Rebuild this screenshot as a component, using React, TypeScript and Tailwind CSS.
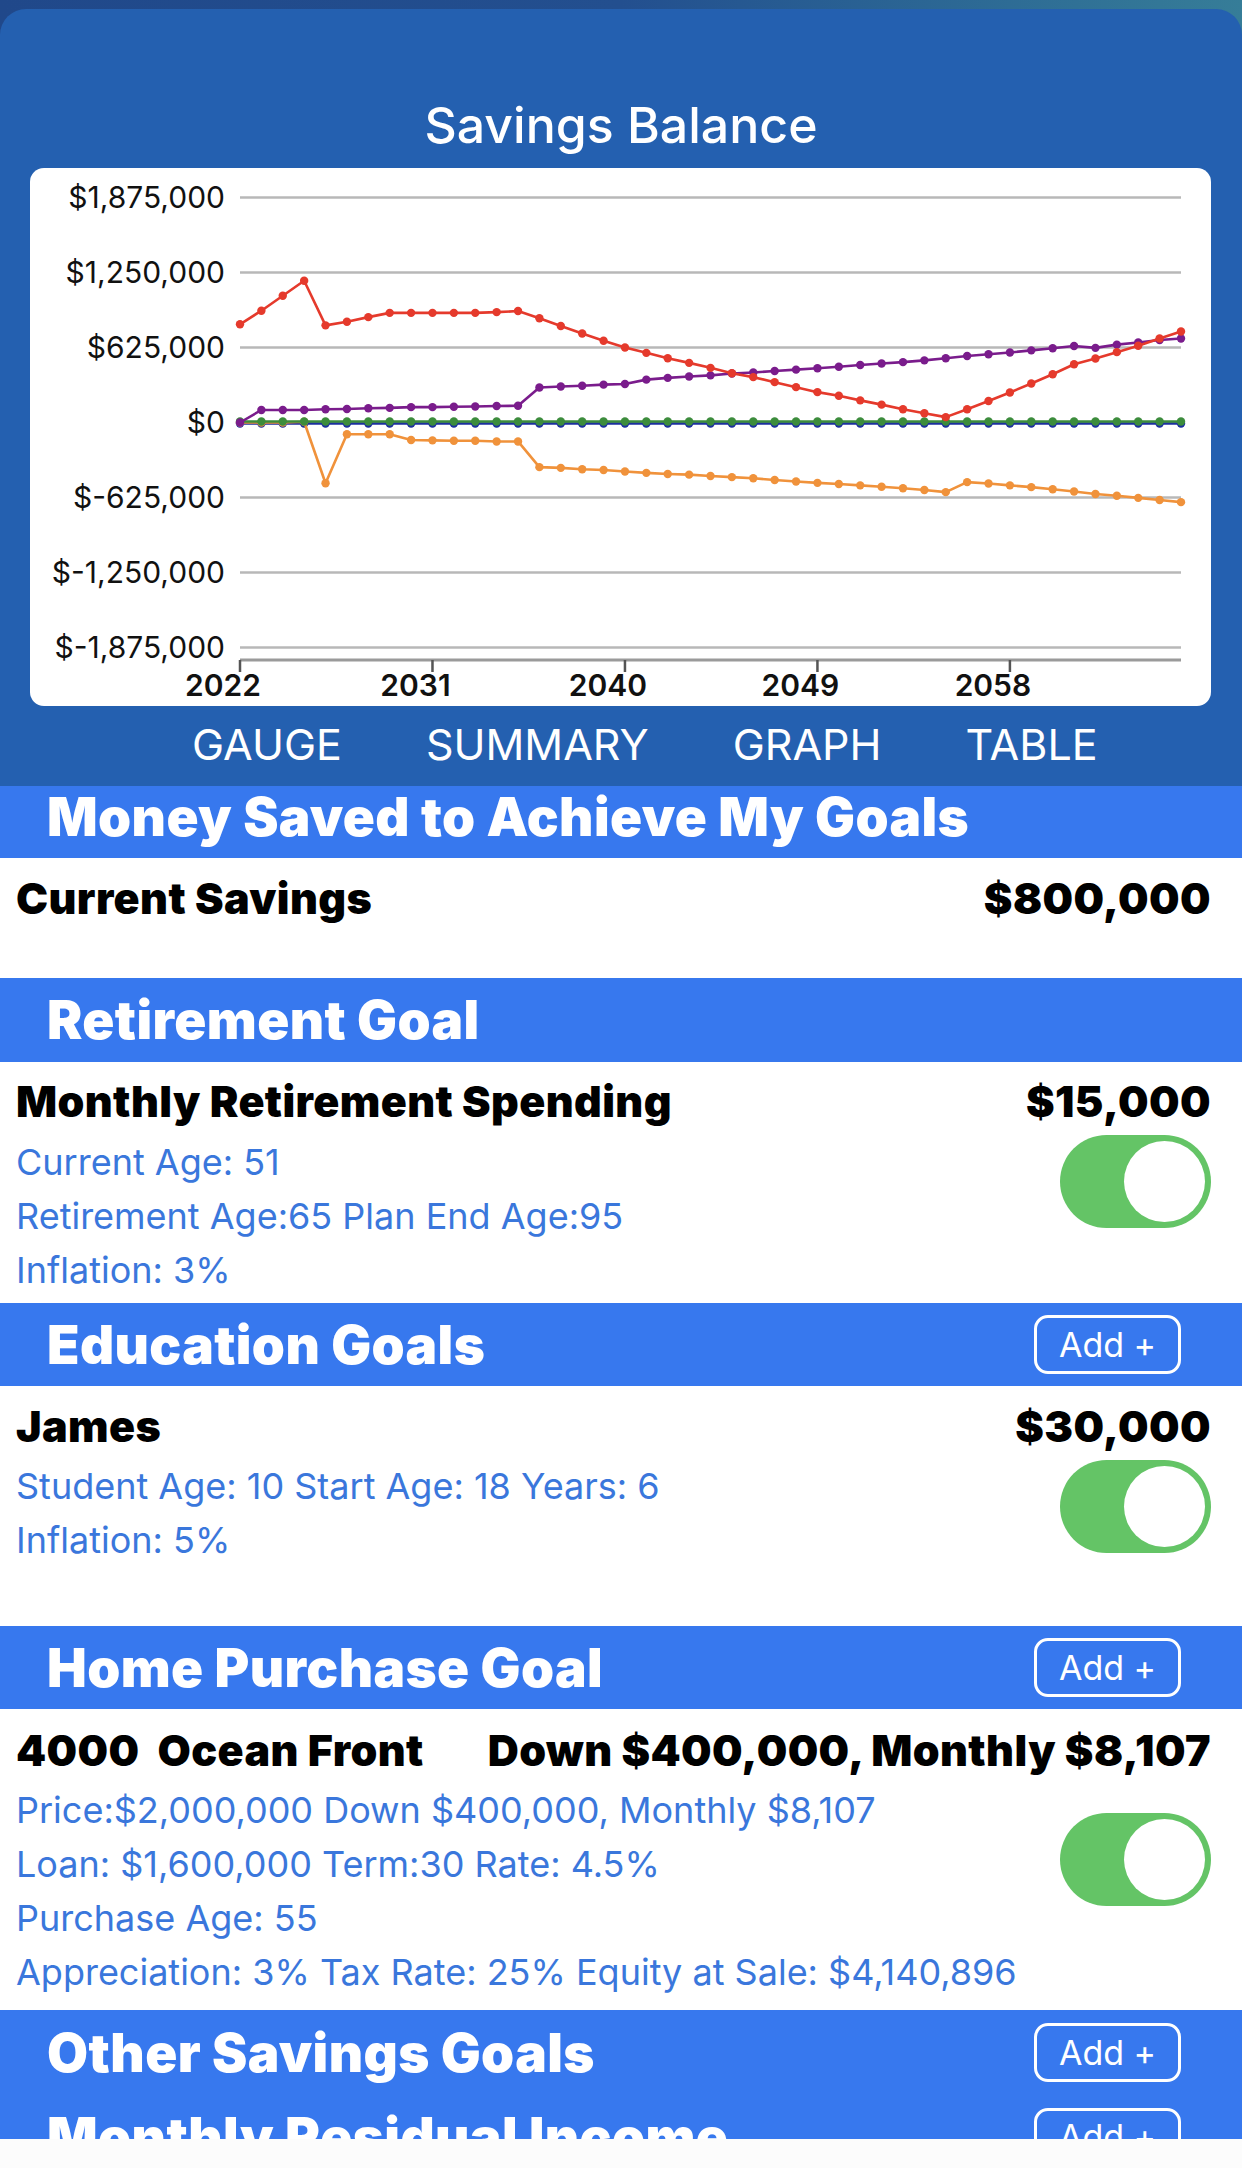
import React from "react";

const X0 = 210;
const DX = 941 / 44;
const toY = (v: number) => v / 2.8 - 8;

const red = [460,422,380,338,463,453,440,428,428,428,428,428,426,423,443,465,486,506,525,540,555,568,582,597,608,622,636,650,660,673,685,698,709,720,698,675,651,626,600,572,556,538,520,500,480];
const purple = [735,700,700,700,698,697,695,694,692,692,691,690,689,688,637,634,632,629,627,615,610,606,603,598,595,591,587,583,579,574,570,566,561,555,549,544,539,533,527,521,526,517,511,504,500];
const orange = [735,735,735,733,905,768,768,768,784,785,786,786,788,788,860,862,866,868,872,876,879,881,885,888,891,896,900,904,907,911,915,919,924,930,902,906,911,916,922,928,935,940,946,952,958];
const green = Array.from({ length: 45 }, () => 732);
const blue = Array.from({ length: 45 }, () => 738);

function Series({ ys, color }: { ys: number[]; color: string }) {
  const pts = ys.map((v, i) => `${X0 + i * DX},${toY(v)}`).join(" ");
  return (
    <g>
      <polyline points={pts} fill="none" stroke={color} strokeWidth={2.6} strokeLinejoin="round" />
      {ys.map((v, i) => (
        <circle key={i} cx={X0 + i * DX} cy={toY(v)} r={4.2} fill={color} />
      ))}
    </g>
  );
}

const yLabels = ["$1,875,000", "$1,250,000", "$625,000", "$0", "$-625,000", "$-1,250,000", "$-1,875,000"];
const years = ["2022", "2031", "2040", "2049", "2058"];

function Chart() {
  return (
    <svg width="1181" height="538" viewBox="0 0 1181 538" className="block">
      {yLabels.map((l, i) => {
        const y = 29.5 + i * 75;
        return (
          <g key={l}>
            <line x1={210} x2={1151} y1={y} y2={y} stroke="#b8b8b8" strokeWidth={2.5} />
            <text x={195} y={y + 10.5} textAnchor="end" fontSize={30} fill="#111" fontFamily="Inter, sans-serif">
              {l}
            </text>
          </g>
        );
      })}
      <line x1={210} x2={1151} y1={492} y2={492} stroke="#9a9a9a" strokeWidth={3} />
      {years.map((yr, k) => {
        const x = 210 + k * 9 * DX;
        return (
          <g key={yr}>
            <line x1={x} x2={x} y1={492} y2={504} stroke="#555" strokeWidth={2.5} />
            <text x={x - 17} y={528} textAnchor="middle" fontSize={30} fontWeight={600} fill="#111" fontFamily="Inter, sans-serif">
              {yr}
            </text>
          </g>
        );
      })}
      <Series ys={blue} color="#1B2F9E" />
      <Series ys={orange} color="#F0923B" />
      <Series ys={green} color="#3C8C3C" />
      <Series ys={purple} color="#7A1C8C" />
      <Series ys={red} color="#E53A2C" />
    </svg>
  );
}

function AddButton() {
  return (
    <div className="flex h-[59px] w-[147px] items-center justify-center rounded-[14px] border-[3px] border-white text-[34px] leading-none text-white">
      Add +
    </div>
  );
}

function Toggle() {
  return (
    <div className="flex h-[93px] w-[151px] shrink-0 items-center justify-end rounded-full bg-[#64C466] pr-[6px]">
      <div className="h-[81px] w-[81px] rounded-full bg-white" />
    </div>
  );
}

function BlueLine({ children }: { children: React.ReactNode }) {
  return <div className="h-[54px] text-[36px] leading-[54px] text-[#3A77DC] whitespace-nowrap">{children}</div>;
}

export default function App() {
  return (
    <div className="w-[1242px] h-[2168px] overflow-hidden bg-white font-[Inter,'Noto_Sans',sans-serif]">
      <div className="bg-linear-to-r from-[#20488A] via-[#234F8F] to-[#367D98] pt-[9px]">
        <div className="rounded-t-[26px] bg-[#2460B0] pt-[87px] pb-[17px]">
          <div className="h-[58px] text-center text-[50px] leading-[58px] font-medium text-white">Savings Balance</div>
          <div className="ml-[30px] mr-[31px] mt-[14px] overflow-hidden rounded-[14px] bg-white">
            <Chart />
          </div>
          <div className="mt-[13px] flex h-[50px] gap-[84px] pl-[192px] text-[43px] leading-[50px] text-white">
            <span>GAUGE</span>
            <span>SUMMARY</span>
            <span>GRAPH</span>
            <span>TABLE</span>
          </div>
        </div>
      </div>

      <div className="flex h-[72px] items-center bg-[#3778EE] pb-[11px] pl-[47px]">
        <span className="text-[53px] leading-[60px] font-black tracking-[0.4px] text-white whitespace-nowrap">Money Saved to Achieve My Goals</span>
      </div>
      <div className="h-[120px] pl-[16px] pr-[31px] pt-[15px]">
        <div className="flex h-[50px] items-center justify-between text-[43px] font-black tracking-[0.4px] leading-[50px] text-black">
          <span>Current Savings</span>
          <span>$800,000</span>
        </div>
      </div>

      <div className="flex h-[84px] items-center justify-between bg-[#3778EE] pl-[47px] pr-[61px]">
        <span className="text-[53px] leading-[60px] font-black tracking-[0.4px] text-white">Retirement Goal</span>
      </div>
      <div className="h-[241px] pl-[16px] pr-[31px] pt-[14px]">
        <div className="flex h-[50px] items-center justify-between text-[43px] font-black tracking-[0.4px] leading-[50px] text-black">
          <span>Monthly Retirement Spending</span>
          <span>$15,000</span>
        </div>
        <div className="mt-[9px] flex items-start justify-between">
          <div>
            <BlueLine>Current Age: 51</BlueLine>
            <BlueLine>Retirement Age:65 Plan End Age:95</BlueLine>
            <BlueLine>Inflation: 3%</BlueLine>
          </div>
          <Toggle />
        </div>
      </div>

      <div className="flex h-[83px] items-center justify-between bg-[#3778EE] pl-[47px] pr-[61px]">
        <span className="text-[53px] leading-[60px] font-black tracking-[0.4px] text-white">Education Goals</span>
        <AddButton />
      </div>
      <div className="h-[240px] pl-[16px] pr-[31px] pt-[15px]">
        <div className="flex h-[50px] items-center justify-between text-[43px] font-black tracking-[0.4px] leading-[50px] text-black">
          <span>James</span>
          <span>$30,000</span>
        </div>
        <div className="mt-[8px] flex items-start justify-between">
          <div>
            <BlueLine>Student Age: 10 Start Age: 18 Years: 6</BlueLine>
            <BlueLine>Inflation: 5%</BlueLine>
          </div>
          <div className="mt-[1px]">
            <Toggle />
          </div>
        </div>
      </div>

      <div className="flex h-[83px] items-center justify-between bg-[#3778EE] pl-[47px] pr-[61px]">
        <span className="text-[53px] leading-[60px] font-black tracking-[0.4px] text-white">Home Purchase Goal</span>
        <AddButton />
      </div>
      <div className="h-[301px] pl-[16px] pr-[31px] pt-[16px]">
        <div className="flex h-[50px] items-center justify-between text-[43px] font-black tracking-[0.4px] leading-[50px] text-black whitespace-pre">
          <span>4000  Ocean Front</span>
          <span>Down $400,000, Monthly $8,107</span>
        </div>
        <div className="mt-[8px] flex items-start justify-between">
          <div>
            <BlueLine>Price:$2,000,000 Down $400,000, Monthly $8,107</BlueLine>
            <BlueLine>Loan: $1,600,000 Term:30 Rate: 4.5%</BlueLine>
            <BlueLine>Purchase Age: 55</BlueLine>
            <BlueLine>Appreciation: 3% Tax Rate: 25% Equity at Sale: $4,140,896</BlueLine>
          </div>
          <div className="mt-[30px]">
            <Toggle />
          </div>
        </div>
      </div>

      <div className="flex h-[85px] items-center justify-between bg-[#3778EE] pl-[47px] pr-[61px]">
        <span className="text-[53px] leading-[60px] font-black tracking-[0.4px] text-white">Other Savings Goals</span>
        <AddButton />
      </div>
      <div className="h-[44px] overflow-hidden bg-[#3778EE]">
        <div className="flex h-[84px] items-center justify-between pl-[47px] pr-[61px]">
          <span className="text-[53px] leading-[60px] font-black tracking-[0.4px] text-white">Monthly Residual Income</span>
          <AddButton />
        </div>
      </div>
      <div className="h-[29px] bg-[#FCFCFC]" />
    </div>
  );
}
